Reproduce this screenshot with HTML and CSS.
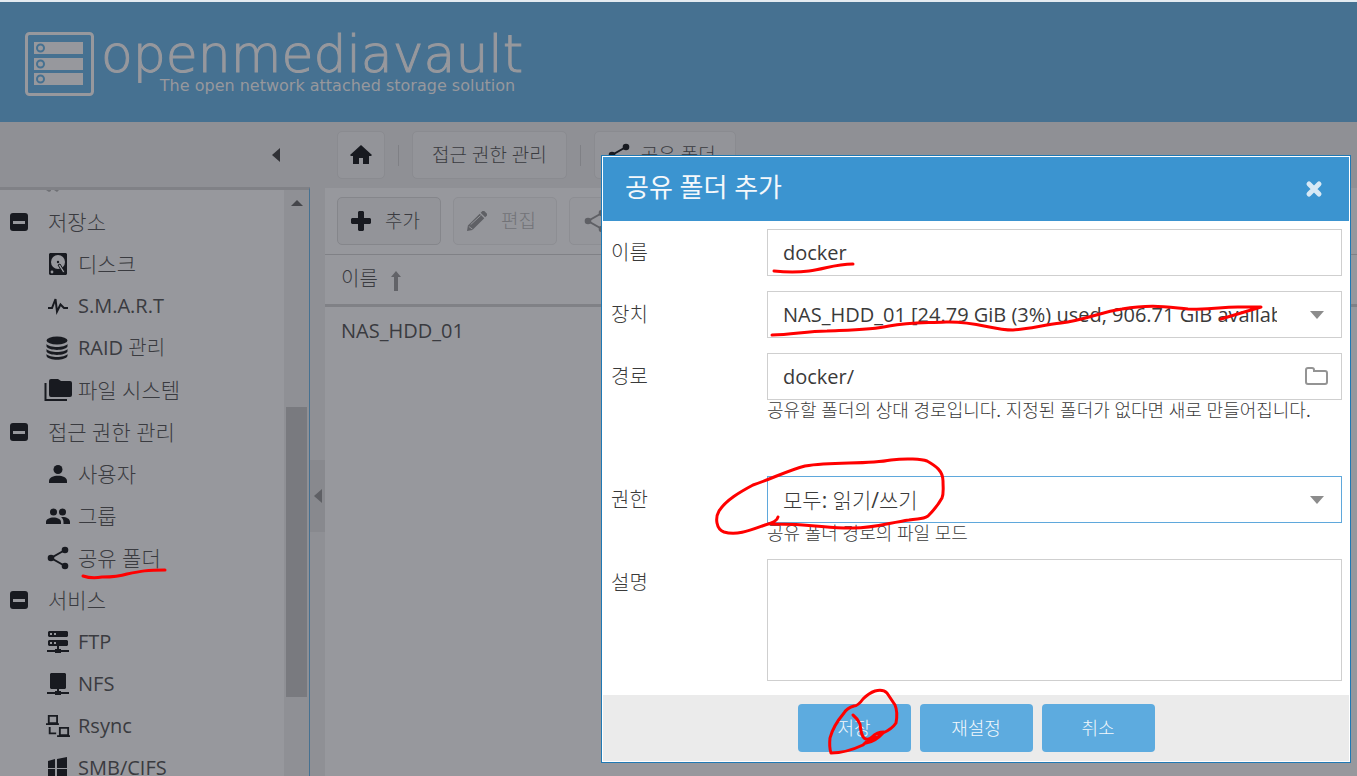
FILE: index.html
```html
<!DOCTYPE html>
<html lang="ko">
<head>
<meta charset="utf-8">
<title>openmediavault</title>
<link rel="stylesheet" href="styles.css">
</head>
<body>
<svg class="sprite" aria-hidden="true">
  <symbol id="minus" viewBox="0 0 18 18"><rect width="18" height="18" rx="3" fill="#181a20"/><rect x="3" y="8" width="12" height="3" fill="#97989d"/></symbol>
  <symbol id="disk" viewBox="0 0 24 24"><path d="M4 1h16l1 1v20l-1 1H4l-1-1V2z"/><circle cx="12" cy="10" r="7" fill="#97989d"/><circle cx="12" cy="10" r="1.200"/><path d="M12 13l2-1 5 8-2 1z" fill="#97989d" stroke="#181a20"/><circle cx="6" cy="20" r="1.400" fill="#97989d"/></symbol>
  <symbol id="pulse" viewBox="0 0 24 24"><path d="M2 14h4l3.500-9 1.500 12.500 3.500-7L18 14h4" fill="none" stroke="#181a20" stroke-width="2"/></symbol>
  <symbol id="raid" viewBox="0 0 24 24"><ellipse cx="11" cy="4.500" rx="10.500" ry="4"/><path d="M.5 8c3 4 18 4 21 0v2.500c-2 4.500-19 4.500-21 0zM.5 13c3 4 18 4 21 0v2.500c-2 4.500-19 4.500-21 0zM.5 18c3 4 18 4 21 0v2c-2 5-19 5-21 0z"/></symbol>
  <symbol id="folders" viewBox="0 0 28 24"><path d="M7 1h7l3 2h9q2 0 2 2v12q0 2-2 2H7q-2 0-2-2V3q0-2 2-2z"/><path d="M1.500 5v17H23" fill="none" stroke="#181a20" stroke-width="2"/></symbol>
  <symbol id="user" viewBox="0 0 24 24"><circle cx="12" cy="7.500" r="4.500"/><path d="M3 21v-2c0-7 18-7 18 0v2z"/></symbol>
  <symbol id="users" viewBox="0 0 26 24"><circle cx="8.500" cy="8" r="3.500"/><circle cx="17.500" cy="8" r="3.500"/><path d="M1 20v-2c0-6 15-6 15 0v2zM17 13c5 0 8 2 8 5v2h-6.500v-2c0-2-1-4-2.500-5z"/></symbol>
  <symbol id="share" viewBox="0 0 24 24"><path d="M19 4L5 12l14 8" fill="none" stroke="currentColor" stroke-width="2"/><circle cx="19" cy="4" r="3.300"/><circle cx="5" cy="12" r="3.300"/><circle cx="19" cy="20" r="3.300"/></symbol>
  <symbol id="ftp" viewBox="0 0 24 24"><path d="M3 1h18l1 1v4l-1 1H3L2 6V2zM3 10h18l1 1v4l-1 1h-8v3h2v1h8v2h-8v1H9v-1H1v-2h8v-1h2v-3H3l-1-1v-4z"/><path d="M4 3h2v2H4zM8 3h2v2H8zM4 12h2v2H4zM8 12h2v2H8z" fill="#97989d"/></symbol>
  <symbol id="nfs" viewBox="0 0 24 24"><path d="M5 1h14l1 1v14l-1 1h-6v2h2v1h8v2h-8v1H9v-1H1v-2h8v-1h2v-2H5l-1-1V2z"/></symbol>
  <symbol id="rsync" viewBox="0 0 26 26"><path d="M3 2h9v8H3zM15 15h9v8h-9zM0 11h14M12 24h14M4 14v7h7" fill="none" stroke="#181a20" stroke-width="2"/></symbol>
  <symbol id="windows" viewBox="0 0 24 24"><path d="M2 5l7-2v9H2zM11 3l10-2v11H11zM2 13h7v9l-7-1zM11 13h10v11l-10-2z"/></symbol>
</svg>

<header class="banner">
  <svg class="logo" viewBox="0 0 70 64" aria-hidden="true"><rect x="1.500" y="1.500" width="66" height="61" rx="3" fill="none" stroke="#97989d" stroke-width="3"/><path fill="#97989d" d="M9 10h49v12H9zM9 26h49v12H9zM9 41h49v12H9z"/><g fill="none" stroke="#467191" stroke-width="2"><circle cx="15.500" cy="16" r="3.500"/><circle cx="15.500" cy="32" r="3.500"/><circle cx="15.500" cy="47" r="3.500"/></g></svg>
  <div class="brand"><span class="brand-name">openmediavault</span><span class="brand-tag">The open network attached storage solution</span></div>
</header>

<div class="workspace">
  <nav class="sidebar">
    <div class="sidebar-head"><button class="plain" aria-label="접기"><svg width="8" height="14" viewBox="0 0 8 14"><path d="M8 0v14L0 7z" fill="#303136"/></svg></button></div>
    <div class="sidebar-body">
      <ul class="tree">
        <li class="row-cut"><svg width="14" height="3"><path d="M0 0h5v1l-2 1zM8 0h5l-2 2z" fill="#6f7075"/></svg></li>
        <li class="group hangul"><svg class="toggle"><use href="#minus"/></svg><span>저장소</span></li>
        <li class="leaf hangul"><svg><use href="#disk"/></svg><a href="#">디스크</a></li>
        <li class="leaf"><svg><use href="#pulse"/></svg><a href="#">S.M.A.R.T</a></li>
        <li class="leaf"><svg><use href="#raid"/></svg><a href="#">RAID 관리</a></li>
        <li class="leaf hangul"><svg><use href="#folders"/></svg><a href="#">파일 시스템</a></li>
        <li class="group hangul"><svg class="toggle"><use href="#minus"/></svg><span>접근 권한 관리</span></li>
        <li class="leaf hangul"><svg><use href="#user"/></svg><a href="#">사용자</a></li>
        <li class="leaf hangul"><svg><use href="#users"/></svg><a href="#">그룹</a></li>
        <li class="leaf hangul"><svg><use href="#share"/></svg><a href="#">공유 폴더</a></li>
        <li class="group hangul"><svg class="toggle"><use href="#minus"/></svg><span>서비스</span></li>
        <li class="leaf"><svg><use href="#ftp"/></svg><a href="#">FTP</a></li>
        <li class="leaf"><svg><use href="#nfs"/></svg><a href="#">NFS</a></li>
        <li class="leaf"><svg><use href="#rsync"/></svg><a href="#">Rsync</a></li>
        <li class="leaf"><svg><use href="#windows"/></svg><a href="#">SMB/CIFS</a></li>
      </ul>
      <div class="scrollbar"><svg width="12" height="6" viewBox="0 0 12 6"><path d="M0 6L6 0l6 6z" fill="#45464b"/></svg><div class="thumb"></div></div>
    </div>
  </nav>
  <div class="splitter"><button class="handle plain" aria-label="사이드바 접기"><svg width="8" height="14" viewBox="0 0 8 14"><path d="M8 0v14L0 7z" fill="#5f6065"/></svg></button></div>
  <main class="main">
    <div class="crumbs">
      <button class="crumb home" aria-label="홈"><svg width="22" height="20" viewBox="0 0 22 20"><path d="M11 0l11 10-1 1h-2v8h-6v-6H9v6H3v-8H1l-1-1z"/></svg></button>
      <i class="sep"></i>
      <button class="crumb">접근 권한 관리</button>
      <i class="sep"></i>
      <button class="crumb current"><svg width="24" height="24"><use href="#share"/></svg>공유 폴더</button>
    </div>
    <div class="panel">
      <div class="toolbar">
        <button class="tool"><svg width="20" height="20" viewBox="0 0 20 20"><path d="M7 1l1-1h4l1 1v6h6l1 1v4l-1 1h-6v6l-1 1H8l-1-1v-6H1l-1-1V8l1-1h6z"/></svg>추가</button>
        <button class="tool" disabled><svg width="20" height="22" viewBox="0 0 22 22"><path d="M15 2l2-2h2l3 3v2l-2 2zM14 3l5 5L6 21l-6 1 1-6z"/><path d="M4 15L15 5M2 17l4 3" stroke="#97989d" fill="none"/></svg>편집</button>
        <button class="tool" disabled><svg width="24" height="24"><use href="#share"/></svg>권한</button>
      </div>
      <table class="grid">
        <thead><tr><th>이름 <svg width="10" height="20" viewBox="0 0 10 20"><path d="M5 0l5 6H7v14H3V6H0z" fill="#626368"/></svg></th></tr></thead>
        <tbody><tr><td>NAS_HDD_01</td></tr></tbody>
      </table>
    </div>
  </main>
</div>

<form class="dialog" role="dialog" aria-labelledby="dialog-title">
  <div class="dialog-head"><h1 id="dialog-title">공유 폴더 추가</h1><button type="button" class="plain" aria-label="닫기"><svg width="18" height="18" viewBox="0 0 18 18"><path d="M4 4l10 10M14 4L4 14" stroke="#d8e9f5" stroke-width="5" stroke-linecap="round"/></svg></button></div>
  <div class="fields">
    <label for="name">이름</label>
    <div class="field"><input id="name" type="text" value="docker"></div>
    <label for="device">장치</label>
    <div class="field with-icon"><select id="device"><option>NAS_HDD_01 [24.79 GiB (3%) used, 906.71 GiB available]</option></select><svg class="field-icon" viewBox="0 0 24 24"><path d="M5 8h14l-7 8z" fill="#8c8c8c"/></svg></div>
    <label for="path">경로</label>
    <div class="field tall with-icon"><input id="path" type="text" value="docker/"><svg class="field-icon" viewBox="0 0 24 24"><path d="M1 17V5q0-2 2-2h4q2 0 2 2v1h11q2 0 2 2v9q0 2-2 2H3q-2 0-2-2z" fill="none" stroke="#949494" stroke-width="2"/></svg><p>공유할 폴더의 상대 경로입니다. 지정된 폴더가 없다면 새로 만들어집니다.</p></div>
    <label for="mode">권한</label>
    <div class="field with-icon"><select id="mode" class="active"><option>모두: 읽기/쓰기</option></select><svg class="field-icon" viewBox="0 0 24 24"><path d="M5 8h14l-7 8z" fill="#8c8c8c"/></svg><p>공유 폴더 경로의 파일 모드</p></div>
    <label for="comment">설명</label>
    <div class="field"><textarea id="comment"></textarea></div>
  </div>
  <div class="dialog-foot"><button type="button">저장</button><button type="button">재설정</button><button type="button">취소</button></div>
</form>

<svg class="ink" width="1357" height="776" viewBox="0 0 1357 776" aria-hidden="true">
  <path d="M83 576q9 3 19 1 16 0 25-3c14-3 20-4 38-4"/>
  <path d="M774 271q19 2 35 0c16-2 26-7 44-7"/>
  <path d="M772 335c20 0 34-4 55-4 25-1 45-1 62-5 20-4 32-3 57-4 30-1 46 8 67 8 16-1 30-5 48-7 24-3 40-11 61-14 30-5 44-2 66 0 27 1 30-2 50-2h23l-40 12"/>
  <path d="M778 517q-1 5-13 8c-14 5-28 11-41 7-8-3-9-14-5-21 7-11 21-19 34-26 18-6 36-15 52-19 29-5 60-1 86-6 15-2 31-1 36 1 9 5 16 10 16 20 0 7 1 12-1 17-5 9-9 13-14 18-6 4-10 2-19 4-21 3-38 9-59 8-25 0-36-4-78-4"/>
  <path d="M853 715Q858 719 860 724Q861 735 864 738Q868 741 872 737Q877 732 884 732L878 737L866 743Q875 742 883 733Q892 729 896 723Q898 712 895 705L887 693Q883 689 875 691Q869 693 863 699Q858 706 854 706Q847 708 844 713Q833 726 830 738Q829 747 831 753Q846 753 863 745Q869 739 875 737"/>
</svg>
</body>
</html>
```
FILE: styles.css
```css
* { box-sizing: border-box; }
body {
  margin: 0;
  height: 100vh;
  display: flex;
  flex-direction: column;
  overflow: hidden;
  position: relative;
  background: #8f9095;
  color: #3a3b40;
  font: 20px/28px "Open Sans", "Noto Sans CJK KR Light", "Noto Sans CJK KR", sans-serif;
}
button, input, select, textarea { font: inherit; color: inherit; margin: 0; }
a { color: inherit; text-decoration: none; }
svg { flex: none; fill: currentColor; }
.hangul { font-size: 21px; }
.sprite { position: absolute; width: 0; height: 0; }
.plain { display: flex; padding: 0; border: 0; background: none; }

.banner {
  height: 122px;
  flex: none;
  display: flex;
  align-items: flex-start;
  gap: 6px;
  padding: 30px 25px 0;
  border-top: 2px solid #e4ebf1;
  background: #467191;
  color: #97989d;
}
.logo { width: 70px; height: 64px; }
.brand { display: flex; flex-direction: column; font-family: "DejaVu Sans", sans-serif; }
.brand-name { font-size: 52px; line-height: 44px; font-weight: 200; white-space: nowrap; -webkit-text-stroke: 1px #97989d; }
.brand-tag { font-size: 16px; line-height: 20px; align-self: flex-end; padding-right: 8px; }

.workspace { flex: 1; min-height: 0; display: flex; }
.sidebar { width: 310px; flex: none; display: flex; flex-direction: column; }
.sidebar-head { height: 65px; flex: none; display: flex; align-items: center; justify-content: flex-end; padding-right: 30px; }
.sidebar-body { flex: 1; min-height: 0; display: flex; border-top: 3px solid #808186; border-right: 1px solid #467191; background: #97989d; }
.tree { flex: 1; margin: 0; padding: 0; list-style: none; overflow: hidden; }
.tree li { display: flex; align-items: center; height: 42px; color: #181a20; white-space: nowrap; }
.tree a, .tree span { color: #3a3b40; }
.tree .row-cut { height: 11px; align-items: flex-start; padding-left: 46px; }
.tree .group { padding-left: 10px; gap: 20px; }
.tree .leaf { padding-left: 44px; gap: 6px; }
.leaf svg { width: 28px; height: 24px; }
.toggle { width: 18px; height: 18px; }
.scrollbar { width: 25px; display: flex; flex-direction: column; align-items: center; padding-top: 10px; background: #8f9095; }
.thumb { width: 21px; height: 290px; margin-top: 201px; background: #797a7f; }
.splitter { width: 15px; flex: none; display: flex; align-items: center; }
.handle { width: 15px; height: 72px; margin-top: 94px; align-items: center; justify-content: center; background: #88898e; }

.main { flex: 1; min-width: 0; display: flex; flex-direction: column; }
.crumbs { height: 66px; flex: none; display: flex; align-items: center; gap: 13px; padding-left: 12px; }
.crumb { height: 48px; display: flex; align-items: center; gap: 10px; padding: 0 19px; border: 1px solid #8a8b90; border-radius: 5px; background: #939499; font-size: 19px; }
.crumb.home { width: 48px; padding: 0; justify-content: center; }
.crumb.current { padding-left: 12px; }
.crumb svg { color: #181a20; }
.sep { width: 1px; height: 21px; background: #7f8085; }
.panel { flex: 1; background: #97989d; }
.toolbar { height: 67px; display: flex; align-items: center; gap: 12px; padding-left: 12px; border-bottom: 1px solid #808186; }
.tool { height: 48px; display: flex; align-items: center; gap: 14px; padding: 0 20px 0 13px; border: 1px solid #85868b; border-radius: 5px; background: #939499; font-size: 19px; }
.tool svg { color: #181a20; }
.tool:disabled { color: #727378; border-color: #8d8e93; background: #95969b; }
.tool:disabled svg { color: #5f6065; }
.grid { width: 100%; border-collapse: collapse; }
.grid th, .grid td { padding: 0 16px; height: 50px; text-align: left; font-weight: 400; }
.grid th { border-bottom: 3px solid #808186; }
.grid th svg { margin-left: 8px; vertical-align: middle; }

.dialog {
  position: absolute;
  top: 155px;
  left: 601px;
  right: 6px;
  padding: 1px;
  border: 1px solid #1f79b4;
  background: #fff;
  color: #3a3a3a;
}
.dialog-head { height: 64px; display: flex; align-items: center; justify-content: space-between; padding: 0 26px 4px 22px; background: #3b94d0; color: #f4f8fb; }
.dialog-head h1 { margin: 0; font-family: "Open Sans", "Noto Sans CJK KR", sans-serif; font-size: 26px; line-height: 32px; font-weight: 400; }
.dialog-head .plain { padding-top: 4px; }
.fields { display: grid; grid-template-columns: 156px 1fr; row-gap: 15px; padding: 8px 7px 14px 8px; }
.fields label { line-height: 48px; }
.field { display: flex; flex-direction: column; position: relative; min-width: 0; }
.field.tall { height: 108px; }
.field input, .field select { width: 100%; height: 47px; padding: 0 15px; border: 1px solid #cfcfcf; border-radius: 0; background: #fff; appearance: none; outline: 0; }
.fields label { height: 47px; }
.with-icon select, .with-icon input { padding-right: 64px; }
.field .active { border-color: #5fa8dc; font-size: 21px; }
.field textarea { width: 100%; height: 122px; border: 1px solid #cfcfcf; resize: none; }
.field-icon { position: absolute; top: 12px; right: 13px; width: 24px; height: 24px; }
.field p { margin: 0; font-size: 18px; line-height: 21px; white-space: nowrap; }
.dialog-foot { height: 66px; display: flex; align-items: center; justify-content: center; gap: 9px; background: #ebebeb; }
.dialog-foot button { width: 113px; height: 48px; border: 0; border-radius: 4px; background: #5dabdf; color: #f2f8fc; font-size: 18px; }

.ink { position: absolute; top: 0; left: 0; pointer-events: none; fill: none; stroke: #f00; stroke-width: 3px; stroke-linecap: round; stroke-linejoin: round; }
```
